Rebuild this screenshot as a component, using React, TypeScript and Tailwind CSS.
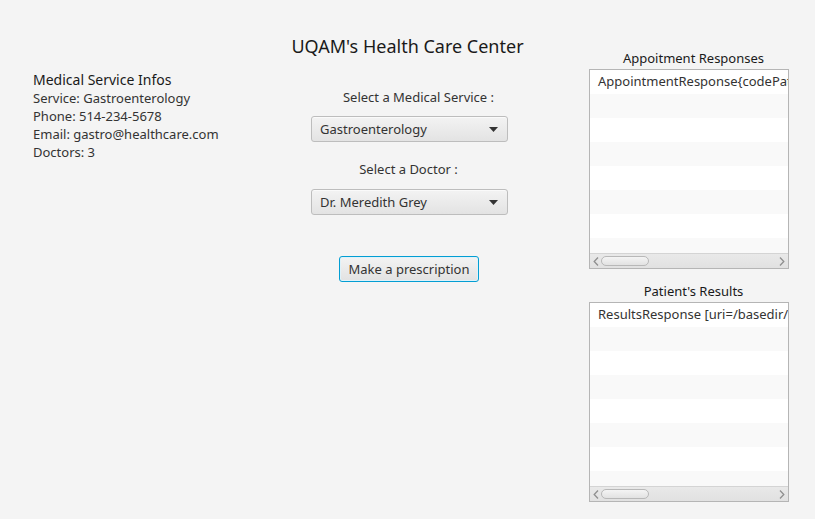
import React from "react";

function Combo({ value }: { value: string }) {
  return (
    <div className="w-[197px] h-[26px] rounded-[3px] border border-[#bdbdbd] bg-linear-to-b from-[#f3f3f3] to-[#e3e3e3] shadow-[inset_0_1px_0_#fafafa] flex items-center pl-[8px] pr-[9px] text-[13px] text-[#333]">
      <span className="flex-1 leading-[18px]">{value}</span>
      <svg width="9" height="5" viewBox="0 0 9 5">
        <path d="M0 0 H9 L4.5 5 Z" fill="#333" />
      </svg>
    </div>
  );
}

function Scrollbar() {
  return (
    <div className="h-[15px] flex items-center bg-linear-to-b from-[#e9e9e9] to-[#e1e1e1] border-t border-[#d4d4d4]">
      <div className="w-[11px] flex justify-center">
        <svg width="6" height="9" viewBox="0 0 6 9">
          <path d="M5 0.5 L1.2 4.5 L5 8.5" fill="none" stroke="#8f8f8f" strokeWidth="1.3" />
        </svg>
      </div>
      <div className="w-[48px] h-[10px] rounded-[5px] border border-[#b8b8b8] bg-linear-to-b from-[#f4f4f4] to-[#e2e2e2]" />
      <div className="flex-1" />
      <div className="w-[12px] flex justify-center">
        <svg width="6" height="9" viewBox="0 0 6 9">
          <path d="M1 0.5 L4.8 4.5 L1 8.5" fill="none" stroke="#8f8f8f" strokeWidth="1.3" />
        </svg>
      </div>
    </div>
  );
}

function ListPanel({ title, first }: { title: string; first: string }) {
  const rows = [0, 1, 2, 3, 4, 5, 6, 7];
  return (
    <div className="flex flex-col">
      <div className="text-center text-[13px] leading-[18px] text-[#1a1a1a]">{title}</div>
      <div className="mt-[2px] w-[200px] h-[200px] border border-[#b5b5b5] bg-white flex flex-col overflow-hidden">
        <div className="flex-1 overflow-hidden">
          {rows.map((i) => (
            <div
              key={i}
              className={
                "h-[24px] flex items-center pl-[8px] whitespace-nowrap overflow-hidden text-[13px] text-[#333] " +
                (i % 2 === 0 ? "bg-white" : "bg-[#f9f9f9]")
              }
            >
              {i === 0 ? first : ""}
            </div>
          ))}
        </div>
        <Scrollbar />
      </div>
    </div>
  );
}

export default function App() {
  return (
    <div
      className="w-[815px] h-[519px] bg-[#f4f4f4] flex overflow-hidden"
      style={{ fontFamily: '"Noto Sans", "Open Sans", sans-serif' }}
    >
      <div className="w-[260px] pl-[33px] pt-[70px] flex flex-col">
        <div className="text-[14px] leading-[19px] text-[#1a1a1a]">Medical Service Infos</div>
        <div className="text-[13px] leading-[18px] text-[#333]">
          <div>Service: Gastroenterology</div>
          <div>Phone: 514-234-5678</div>
          <div>Email: gastro@healthcare.com</div>
          <div>Doctors: 3</div>
        </div>
      </div>
      <div className="w-[299px] pt-[34px] flex flex-col items-center">
        <div className="mr-[4px] text-[18px] leading-[24px] text-[#1a1a1a] whitespace-nowrap">UQAM's Health Care Center</div>
        <div className="mt-[30px] pl-[18px] text-[13px] leading-[18px] text-[#333]">Select a Medical Service :</div>
        <div className="mt-[10px]">
          <Combo value="Gastroenterology" />
        </div>
        <div className="mt-[18px] mr-[2px] text-[13px] leading-[18px] text-[#333]">Select a Doctor :</div>
        <div className="mt-[11px]">
          <Combo value="Dr. Meredith Grey" />
        </div>
        <button className="mt-[41px] mr-[1px] w-[140px] h-[26px] rounded-[3px] border border-[#039ed3] shadow-[inset_0_0_0_1px_#dff2fa] bg-linear-to-b from-[#f3f3f3] to-[#e2e2e2] text-[13px] leading-[18px] text-[#333] flex items-center justify-center">
          Make a prescription
        </button>
      </div>
      <div className="w-[30px]" />
      <div className="w-[209px] pt-[49px] flex flex-col">
        <ListPanel title="Appoitment Responses" first="AppointmentResponse{codePatient=123" />
        <div className="mt-[13px]">
          <ListPanel title="Patient's Results" first="ResultsResponse [uri=/basedir/results]" />
        </div>
      </div>
    </div>
  );
}
